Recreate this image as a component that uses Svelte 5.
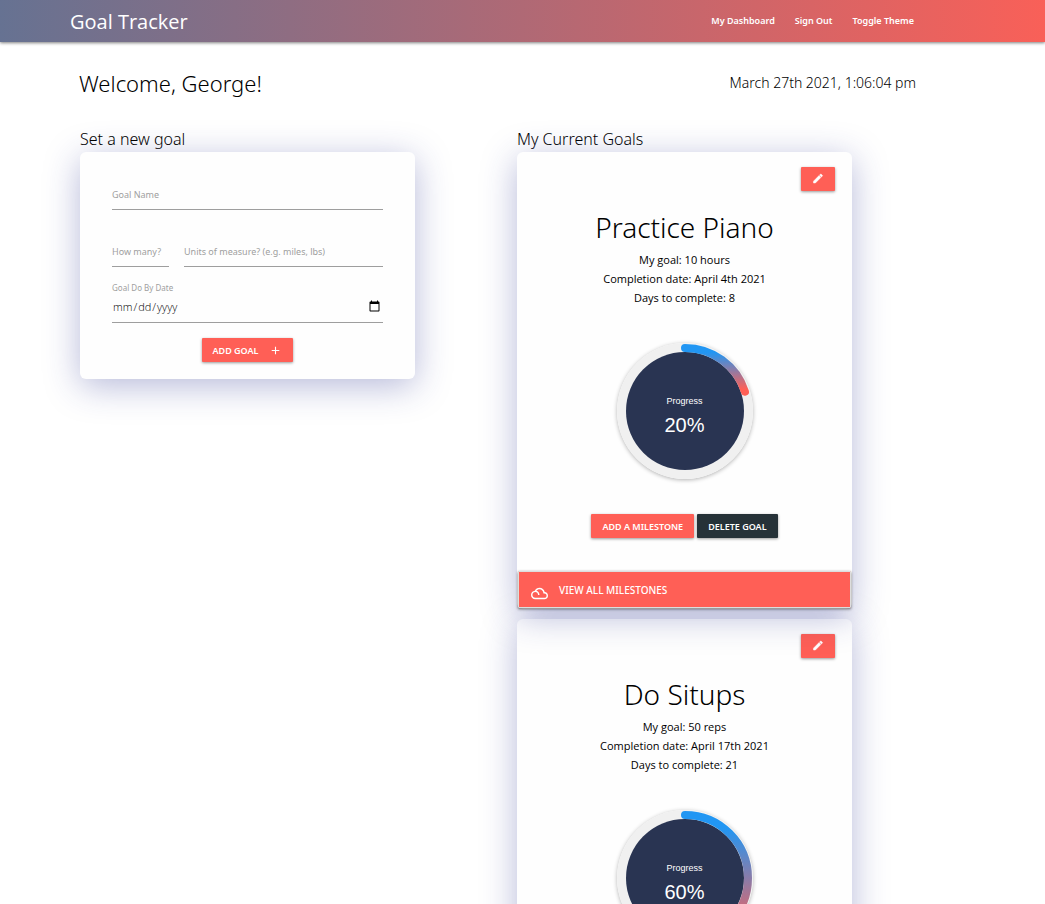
<script>
  const goals = [
    { name: 'Practice Piano', target: '10 hours', due: 'April 4th 2021', days: 8, percent: 20 },
    { name: 'Do Situps', target: '50 reps', due: 'April 17th 2021', days: 21, percent: 60 },
  ];

  const circumference = 2 * Math.PI * 63;

  // Lowest point the arc reaches, where its colour ends.
  const arcBottom = (percent) =>
    percent >= 50 ? 131 : 68 - 63 * Math.cos((2 * Math.PI * percent) / 100);
</script>

<header class="topbar">
  <a class="brand" href="#home">Goal Tracker</a>
  <nav>
    <a href="#dashboard">My Dashboard</a>
    <a href="#signout">Sign Out</a>
    <a href="#theme">Toggle Theme</a>
  </nav>
</header>

<div class="welcome">
  <h1>Welcome, George!</h1>
  <time>March 27th 2021, 1:06:04 pm</time>
</div>

<main>
  <section>
    <h2>Set a new goal</h2>
    <form class="card form" onsubmit={(e) => e.preventDefault()}>
      <div class="field">
        <input id="goal-name" type="text" />
        <label for="goal-name">Goal Name</label>
      </div>
      <div class="pair">
        <div class="field">
          <input id="goal-amount" type="text" />
          <label for="goal-amount">How many?</label>
        </div>
        <div class="field">
          <input id="goal-units" type="text" />
          <label for="goal-units">Units of measure? (e.g. miles, lbs)</label>
        </div>
      </div>
      <div class="date-field">
        <label for="goal-date">Goal Do By Date</label>
        <input id="goal-date" type="date" />
      </div>
      <button class="btn add" type="submit">
        Add Goal
        <svg viewBox="0 0 24 24" aria-hidden="true"><path d="M19 13h-6v6h-2v-6H5v-2h6V5h2v6h6v2z" /></svg>
      </button>
    </form>
  </section>

  <section>
    <h2>My Current Goals</h2>
    <div class="goals">
      {#each goals as goal, i}
        <article class="card goal" style:z-index={goals.length - i}>
          <button class="btn edit" aria-label="Edit goal">
            <svg viewBox="0 0 24 24" aria-hidden="true"><path d="M3 17.25V21h3.75L17.81 9.94l-3.75-3.75L3 17.25zM20.71 7.04c.39-.39.39-1.02 0-1.41l-2.34-2.34c-.39-.39-1.02-.39-1.41 0l-1.83 1.83 3.75 3.75 1.83-1.83z" /></svg>
          </button>
          <h3>{goal.name}</h3>
          <p>My goal: {goal.target}</p>
          <p>Completion date: {goal.due}</p>
          <p>Days to complete: {goal.days}</p>
          <div class="dial">
            <svg viewBox="0 0 136 136" aria-hidden="true">
              <defs>
                <linearGradient id="sweep-{i}" gradientUnits="userSpaceOnUse" x1="68" y1="5" x2="68" y2={arcBottom(goal.percent)}>
                  <stop offset="0.1" stop-color="#2196f3" />
                  <stop offset="0.95" stop-color="#ff5f56" />
                </linearGradient>
              </defs>
              <circle cx="68" cy="68" r="68" fill="#f0f0f0" />
              <circle cx="68" cy="68" r="59" fill="#293452" />
              <path
                d="M68 5a63 63 0 0 1 0 126a63 63 0 0 1 0 -126" fill="none" stroke="url(#sweep-{i})" stroke-width="8"
                stroke-linecap="round" stroke-dasharray="{(circumference * goal.percent) / 100} {circumference}"
              />
            </svg>
            <div class="reading">
              <span>Progress</span>
              <strong>{goal.percent}%</strong>
            </div>
          </div>
          <div class="actions">
            <button class="btn">Add a Milestone</button>
            <button class="btn dark">Delete Goal</button>
          </div>
          <button class="milestones">
            <svg viewBox="0 0 24 24" aria-hidden="true"><path d="M19.35 10.04C18.67 6.59 15.64 4 12 4 9.11 4 6.61 5.64 5.36 8.04 2.35 8.36 0 10.9 0 14c0 3.31 2.69 6 6 6h13c2.76 0 5-2.24 5-5 0-2.64-2.05-4.78-4.65-4.96zM19 18H6c-2.21 0-4-1.79-4-4s1.79-4 4-4 4 1.79 4 4h2c0-2.76-1.86-5.08-4.4-5.78C8.61 6.88 10.2 6 12 6c3.03 0 5.5 2.47 5.5 5.5v.5H19c1.65 0 3 1.35 3 3s-1.35 3-3 3z" /></svg>
            View All Milestones
          </button>
        </article>
      {/each}
    </div>
  </section>
</main>

<style>
  :global(body) {
    background: #fff;
    color: #000;
    font-family: 'Noto Sans', 'Open Sans', sans-serif;
    overflow-x: hidden;
  }

  :global(html) {
    scrollbar-width: none;
  }

  h1,
  h2,
  h3,
  p {
    margin: 0;
    font-weight: 300;
  }

  button {
    border: 0;
    font-family: inherit;
    text-transform: uppercase;
    cursor: pointer;
  }

  svg {
    fill: currentColor;
  }

  .topbar {
    display: flex;
    align-items: center;
    justify-content: space-between;
    height: 42px;
    padding: 0 131px 0 70px;
    background: linear-gradient(90deg, #667292, #f96058);
    box-shadow: 0 1px 3px rgba(0, 0, 0, 0.5);
  }

  .topbar a {
    color: #fff;
    text-decoration: none;
  }

  .brand {
    font-family: 'Open Sans', sans-serif;
    font-size: 20px;
  }

  nav {
    display: flex;
    gap: 20px;
    padding-bottom: 2px;
    font-size: 9px;
    font-weight: 600;
  }

  .welcome {
    display: flex;
    align-items: center;
    justify-content: space-between;
    padding: 25px 129px 0 79px;
    line-height: 32px;
  }

  h1 {
    font-size: 22px;
  }

  time {
    font-size: 14px;
    font-weight: 300;
  }

  main {
    display: grid;
    grid-template-columns: 1fr 1fr;
    gap: 102px;
    align-items: start;
    padding: 27px 193px 0 80px;
  }

  h2 {
    font-size: 16px;
    line-height: 26px;
  }

  .card {
    border-radius: 6px;
    background: #fefefe;
    box-shadow: 0 7px 35px rgba(40, 50, 145, 0.34);
  }

  .form {
    display: flex;
    flex-direction: column;
    padding: 26px 32px 16px;
  }

  .field {
    display: flex;
    flex-direction: column-reverse;
    margin-bottom: 25px;
    min-width: 0;
  }

  .field label {
    margin-bottom: -34px;
    font-size: 9px;
    line-height: 34px;
    color: #9e9e9e;
    white-space: nowrap;
    pointer-events: none;
  }

  input {
    box-sizing: border-box;
    width: 100%;
    height: 32px;
    padding: 0;
    border: 0;
    border-bottom: 1px solid #9e9e9e;
    background: transparent;
    font: 400 13px 'Open Sans', sans-serif;
    color: #000;
    outline: 0;
  }

  .pair {
    display: grid;
    grid-template-columns: 57fr 199fr;
    gap: 15px;
  }

  .pair .field {
    margin-bottom: 16px;
  }

  .date-field label {
    display: block;
    font-size: 8px;
    line-height: 10px;
    color: #9e9e9e;
  }

  .date-field input {
    height: 30px;
    padding-bottom: 2px;
  }

  .date-field input::-webkit-datetime-edit {
    font-size: 11px;
    font-weight: 300;
  }

  .btn {
    display: inline-flex;
    align-items: center;
    justify-content: center;
    height: 24px;
    padding: 0 11px;
    border-radius: 1px;
    background: #ff5f56;
    color: #fff;
    font-size: 9px;
    font-weight: 600;
    box-shadow: 0 1px 3px rgba(0, 0, 0, 0.4);
  }

  .add {
    align-self: center;
    gap: 11px;
    margin-top: 15px;
    margin-bottom: 1px;
  }

  .btn svg {
    width: 13px;
    height: 13px;
  }

  .goals {
    display: flex;
    flex-direction: column;
    gap: 10px;
  }

  .goal {
    display: flex;
    flex-direction: column;
    align-items: center;
    position: relative;
    padding: 15px 1px 1px;
  }

  .edit {
    align-self: flex-end;
    width: 34px;
    margin-right: 16px;
    padding-bottom: 2px;
  }

  .edit svg {
    stroke: currentColor;
    stroke-width: 1;
  }

  h3 {
    margin: 17px 0 3px;
    font-size: 28px;
    line-height: 39px;
  }

  p {
    font-family: 'Open Sans', sans-serif;
    font-size: 11px;
    line-height: 19px;
    font-weight: 400;
  }

  .dial {
    display: grid;
    width: 136px;
    height: 136px;
    margin-top: 36px;
    border-radius: 50%;
    box-shadow: 0 1px 4px rgba(0, 0, 0, 0.3);
    color: #fff;
    font-family: 'Liberation Sans', Arial, sans-serif;
  }

  .dial > * {
    grid-area: 1 / 1;
  }

  .reading {
    display: flex;
    flex-direction: column;
    align-items: center;
    padding-top: 52px;
    font-size: 9px;
    line-height: 12px;
  }

  strong {
    margin-top: 6px;
    font-size: 20px;
    font-weight: 400;
    line-height: 24px;
  }

  .actions {
    display: flex;
    gap: 3px;
    margin: 35px 0 33px;
  }

  .dark {
    background: #263238;
  }

  .milestones {
    display: flex;
    align-items: center;
    align-self: stretch;
    height: 37px;
    padding: 0 12px;
    gap: 11px;
    border: 1px solid #ddd;
    border-radius: 1px;
    background: #ff5f56;
    box-shadow: 0 1px 3px rgba(0, 0, 0, 0.6);
    color: #fff;
    font-size: 10px;
    font-weight: 500;
  }

  .milestones svg {
    width: 17px;
    height: 17px;
    margin-top: 8px;
  }
</style>
